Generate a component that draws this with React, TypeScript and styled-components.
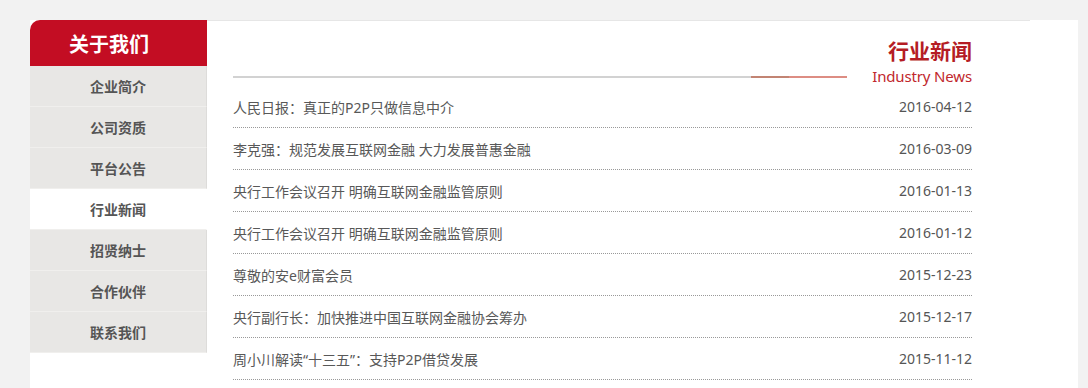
import React from "react";
import styled, { createGlobalStyle } from "styled-components";

const GlobalStyle = createGlobalStyle`
  html, body { margin: 0; padding: 0; background: #f2f2f2; }
  body { font-family: "Noto Sans", "Noto Sans CJK SC", sans-serif; }
  * { box-sizing: border-box; }
`;

const Page = styled.div`
  padding: 20px 0 0 30px;
`;

const Container = styled.div`
  width: 1048px;
  min-height: calc(100vh - 20px);
  background: #fff;
  display: flex;
  align-items: flex-start;
`;

const Sidebar = styled.aside`
  width: 177px;
  flex-shrink: 0;
`;

const SideHeader = styled.div`
  height: 46px;
  background: #c30d23;
  border-top-left-radius: 10px;
  color: #fff;
  font-family: "Noto Sans CJK SC", sans-serif;
  font-weight: 700;
  font-size: 20px;
  display: flex;
  align-items: center;
  justify-content: center;
  padding-right: 19px;
`;

const SideList = styled.ul`
  list-style: none;
  margin: 0;
  padding: 0;
`;

const SideItem = styled.li<{ $active?: boolean }>`
  height: 41px;
  background: ${(p) => (p.$active ? "#fff" : "#e8e7e5")};
  border-bottom: 1px solid #f0efed;
  border-right: 1px solid ${(p) => (p.$active ? "#fff" : "#dddcda")};
  color: #555;
  font-family: "Noto Sans CJK SC", sans-serif;
  font-weight: 700;
  font-size: 14px;
  display: flex;
  align-items: center;
  justify-content: center;
`;

const Main = styled.main`
  width: 823px;
  border-top: 1px solid #e6e6e6;
  padding: 0 58px 0 26px;
`;

const Header = styled.div`
  padding-top: 14px;
`;

const Title = styled.h2`
  margin: 0;
  text-align: right;
  color: #b51c24;
  font-family: "Noto Sans CJK SC", sans-serif;
  font-weight: 700;
  font-size: 21px;
  line-height: 30px;
`;

const SubRow = styled.div`
  display: flex;
  align-items: center;
  margin-top: 1px;
`;

const Rule = styled.div`
  flex: 1;
  height: 2px;
  background: linear-gradient(
    to right,
    #d2d2d2 0,
    #d2d2d2 calc(100% - 96px),
    #c28473 calc(100% - 96px),
    #c28473 calc(100% - 58px),
    #dd8d83 calc(100% - 58px),
    #dd8d83 100%
  );
  margin-top: 1px;
`;

const SubTitle = styled.span`
  margin-left: 25px;
  color: #c1272d;
  font-family: "Noto Sans", sans-serif;
  font-size: 15px;
  letter-spacing: -0.15px;
  line-height: 20px;
`;

const NewsList = styled.ul`
  list-style: none;
  margin: 0;
  padding: 0;
`;

const NewsRow = styled.li`
  height: 42px;
  border-bottom: 1px dotted #999;
  display: flex;
  align-items: center;
  justify-content: space-between;
  color: #585858;
  font-size: 14px;
`;

const NewsTitle = styled.span`
  font-family: "Noto Sans", "Noto Sans CJK SC", sans-serif;
`;

const NewsDate = styled.span`
  font-family: "Noto Sans", sans-serif;
  color: #555;
`;

const menu = ["企业简介", "公司资质", "平台公告", "行业新闻", "招贤纳士", "合作伙伴", "联系我们"];

const news = [
  ["人民日报：真正的P2P只做信息中介", "2016-04-12"],
  ["李克强：规范发展互联网金融 大力发展普惠金融", "2016-03-09"],
  ["央行工作会议召开 明确互联网金融监管原则", "2016-01-13"],
  ["央行工作会议召开 明确互联网金融监管原则", "2016-01-12"],
  ["尊敬的安e财富会员", "2015-12-23"],
  ["央行副行长：加快推进中国互联网金融协会筹办", "2015-12-17"],
  ["周小川解读“十三五”：支持P2P借贷发展", "2015-11-12"],
];

export default function App() {
  return (
    <>
      <GlobalStyle />
      <Page>
        <Container>
          <Sidebar>
            <SideHeader>关于我们</SideHeader>
            <SideList>
              {menu.map((m) => (
                <SideItem key={m} $active={m === "行业新闻"}>
                  {m}
                </SideItem>
              ))}
            </SideList>
          </Sidebar>
          <Main>
            <Header>
              <Title>行业新闻</Title>
              <SubRow>
                <Rule />
                <SubTitle>Industry News</SubTitle>
              </SubRow>
            </Header>
            <NewsList>
              {news.map(([t, d], i) => (
                <NewsRow key={i}>
                  <NewsTitle>{t}</NewsTitle>
                  <NewsDate>{d}</NewsDate>
                </NewsRow>
              ))}
            </NewsList>
          </Main>
        </Container>
      </Page>
    </>
  );
}
